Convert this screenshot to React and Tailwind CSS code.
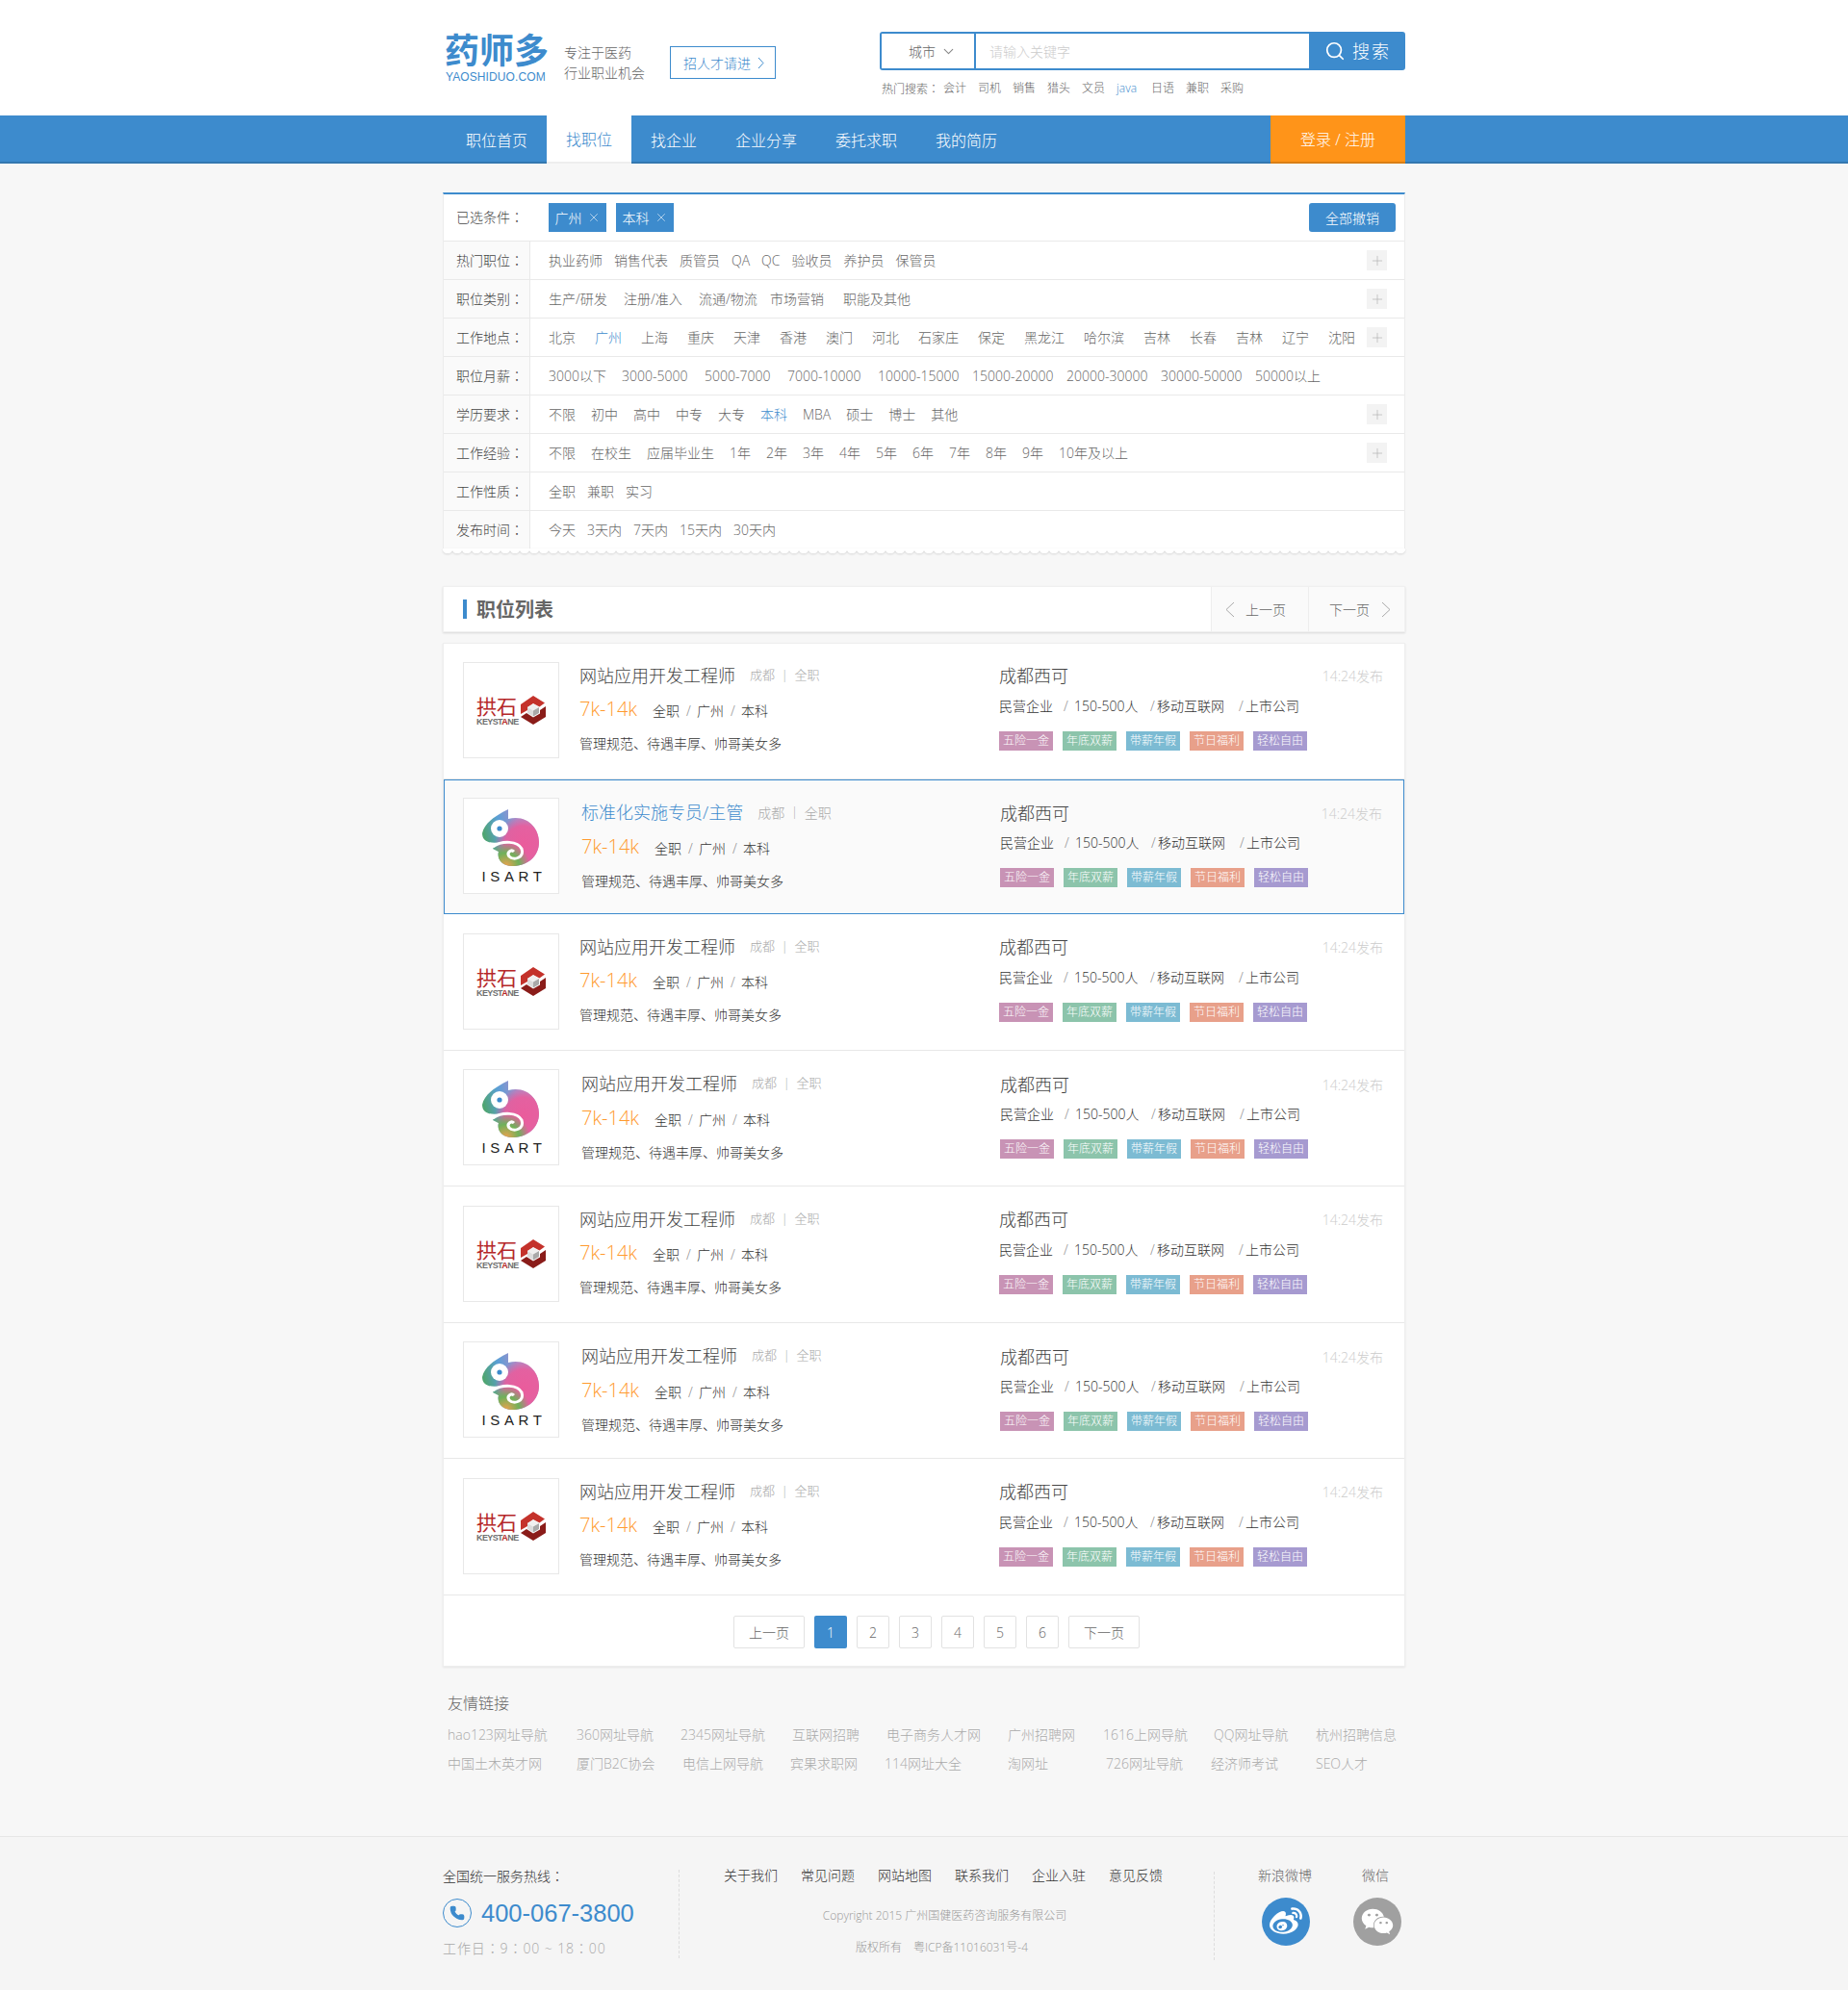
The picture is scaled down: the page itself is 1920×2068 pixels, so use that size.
import React from "react";
import { ChevronDown, Search, X, Plus, Phone } from "lucide-react";
import { FaWeibo, FaWeixin } from "react-icons/fa";

const FONT = "font-['Open_Sans','Noto_Sans_CJK_SC',sans-serif]";

const Co = () => <span className="font-['Noto_Sans_CJK_TC',sans-serif]">：</span>;

function Chev({ dir = "right", w = 7, h = 13, color = "#3d8bcd" }) {
  const pts = dir === "right" ? `1,1 ${w - 1},${h / 2} 1,${h - 1}` : `${w - 1},1 1,${h / 2} ${w - 1},${h - 1}`;
  return (
    <svg width={w} height={h} viewBox={`0 0 ${w} ${h}`} className="shrink-0">
      <polyline points={pts} fill="none" stroke={color} strokeWidth="1" />
    </svg>
  );
}

const filterRows = [
  { label: "热门职位", gap: "gap-3", plus: true, items: [["执业药师"], ["销售代表"], ["质管员"], ["QA"], ["QC"], ["验收员"], ["养护员"], ["保管员"]] },
  { label: "职位类别", gap: "", plus: true, items: [["生产/研发", "w-[78px]"], ["注册/准入", "w-[78px]"], ["流通/物流", "w-[74px]"], ["市场营销", "w-[76px]"], ["职能及其他"]] },
  { label: "工作地点", gap: "gap-5", plus: true, items: [["北京"], ["广州", "text-[#3d8bcd]"], ["上海"], ["重庆"], ["天津"], ["香港"], ["澳门"], ["河北"], ["石家庄"], ["保定"], ["黑龙江"], ["哈尔滨"], ["吉林"], ["长春"], ["吉林"], ["辽宁"], ["沈阳"]] },
  { label: "职位月薪", gap: "", plus: false, items: [["3000以下", "w-[76px]"], ["3000-5000", "w-[86px]"], ["5000-7000", "w-[86px]"], ["7000-10000", "w-[94px]"], ["10000-15000", "w-[98px]"], ["15000-20000", "w-[98px]"], ["20000-30000", "w-[98px]"], ["30000-50000", "w-[98px]"], ["50000以上"]] },
  { label: "学历要求", gap: "gap-4", plus: true, items: [["不限"], ["初中"], ["高中"], ["中专"], ["大专"], ["本科", "text-[#3d8bcd]"], ["MBA"], ["硕士"], ["博士"], ["其他"]] },
  { label: "工作经验", gap: "gap-4", plus: true, items: [["不限"], ["在校生"], ["应届毕业生"], ["1年"], ["2年"], ["3年"], ["4年"], ["5年"], ["6年"], ["7年"], ["8年"], ["9年"], ["10年及以上"]] },
  { label: "工作性质", gap: "gap-3", plus: false, items: [["全职"], ["兼职"], ["实习"]] },
  { label: "发布时间", gap: "gap-3", plus: false, items: [["今天"], ["3天内"], ["7天内"], ["15天内"], ["30天内"]] },
];

const tags = [
  ["五险一金", "bg-[#c893b5]"],
  ["年底双薪", "bg-[#8cc4ab]"],
  ["带薪年假", "bg-[#7cbbd3]"],
  ["节日福利", "bg-[#e8a08a]"],
  ["轻松自由", "bg-[#a69ad0]"],
];

const links1 = [
  ["hao123网址导航", "w-[134px]"], ["360网址导航", "w-[108px]"], ["2345网址导航", "w-[116px]"], ["互联网招聘", "w-[98px]"], ["电子商务人才网", "w-[126px]"], ["广州招聘网", "w-[99px]"], ["1616上网导航", "w-[115px]"], ["QQ网址导航", "w-[106px]"], ["杭州招聘信息", ""],
];
const links2 = [
  ["中国土木英才网", "w-[134px]"], ["厦门B2C协会", "w-[110px]"], ["电信上网导航", "w-[112px]"], ["宾果求职网", "w-[98px]"], ["114网址大全", "w-[128px]"], ["淘网址", "w-[102px]"], ["726网址导航", "w-[109px]"], ["经济师考试", "w-[109px]"], ["SEO人才", ""],
];

const rowHeights = ["h-[141px]", "h-[140px]", "h-[142px]", "h-[141px]", "h-[142px]", "h-[141px]", "h-[142px]"];

function KeystoneLogo() {
  return (
    <div className="flex items-start pt-[33px] pl-[13px]">
      <div className="w-[46px]">
        <div className="text-[21px] leading-[22px] font-normal text-[#b5282a] whitespace-nowrap font-['Noto_Sans_CJK_SC',sans-serif]">拱石</div>
        <div className="mt-[2px] text-[9px] leading-[9px] font-bold tracking-[-0.6px] text-[#6f6f6f] whitespace-nowrap font-['Liberation_Sans',sans-serif]">
          KEYST<span className="text-[#b5282a]">A</span>NE
        </div>
      </div>
      <svg width="26" height="30" viewBox="0 0 26 30" className="mt-[1px]">
        <path d="M0 9 L13 0 L25 7.5 L19.5 11.5 L13 8 L7 12 L7 15 L0 19 Z" fill="#c4322b" />
        <path d="M26 11 L26 22 L13 30 L0 22 L6 18 L13 22.5 L20 18.5 L20 15 Z" fill="#8a1c19" />
        <path d="M13 8.5 L19 12 L13 15.5 L7 12 Z" fill="#f0f0f0" />
        <path d="M7 12 L13 15.5 L13 21.5 L7 18 Z" fill="#dcdcdc" />
        <path d="M19 12 L13 15.5 L13 21.5 L19 18 Z" fill="#a9a9a9" />
      </svg>
    </div>
  );
}

function IsartLogo() {
  const body = "M19 36 C21 25 34 17 46 11 L46 21 C66 16 78 31 78 45 C78 60 66 70 50 70 C40 70 34 63 36 55 L30 52 C33 47 36 46 39 45 C30 47 19 46 19 36 Z";
  return (
    <div className="flex flex-col items-center">
      <svg width="98" height="74" viewBox="0 0 98 74" className="block">
        <defs>
          <linearGradient id="chamA" x1="0" y1="0.35" x2="1" y2="0.1">
            <stop offset="0" stopColor="#4fa56f" />
            <stop offset="0.3" stopColor="#5a9fd6" />
            <stop offset="0.62" stopColor="#a58fcb" />
            <stop offset="1" stopColor="#c08ac0" />
          </linearGradient>
          <radialGradient id="chamP" cx="0.72" cy="0.62" r="0.5">
            <stop offset="0" stopColor="#ea5c9c" />
            <stop offset="0.65" stopColor="#ea5c9c" stopOpacity="0.9" />
            <stop offset="1" stopColor="#ea5c9c" stopOpacity="0" />
          </radialGradient>
          <radialGradient id="chamB" cx="0.42" cy="1" r="0.42">
            <stop offset="0" stopColor="#eda14d" />
            <stop offset="0.55" stopColor="#6fb15a" />
            <stop offset="1" stopColor="#6fb15a" stopOpacity="0" />
          </radialGradient>
        </defs>
        <path d={body} fill="url(#chamA)" />
        <path d={body} fill="url(#chamP)" />
        <path d={body} fill="url(#chamB)" />
        <circle cx="37" cy="31" r="9" fill="#fff" />
        <circle cx="37" cy="31" r="2.6" fill="#3d8bcd" />
        <path d="M30 50 C40 43 56 44 60 52 C63 61 52 65 47 60 C44 56 49 52 52 55" fill="none" stroke="#fff" strokeWidth="3" />
      </svg>
      <div className="mt-0 text-[15px] leading-[14px] tracking-[4.6px] text-[#222] font-['Liberation_Sans',sans-serif] pl-[6px]">ISART</div>
    </div>
  );
}

function JobRow({ i }) {
  const even = i % 2 === 1;
  const active = i === 1;
  const late = !even && i > 0;
  return (
    <div className={`flex ${rowHeights[i]} ${active ? "border border-[#3d8bcd] bg-[#fafafa]" : "border-b border-[#e8e8e8]"} ${even && !active ? "border-t border-t-transparent" : ""}`}>
      <div className={`${active ? "ml-[19px] mt-[18px]" : even ? "ml-5 mt-[18px]" : late ? "ml-5 mt-5" : "ml-5 mt-[19px]"} w-[100px] h-[100px] border border-[#e8e8e8] bg-white shrink-0`}>
        {even ? <IsartLogo /> : <KeystoneLogo />}
      </div>
      <div className={`${even ? "ml-[23px] w-[435px]" : "ml-[21px] w-[436px]"} ${late ? "pt-[21px]" : "pt-5"}`}>
        <div className="flex items-center h-[26px]">
          <span className={`text-[18px] leading-[26px] whitespace-nowrap ${active ? "text-[#3d8bcd]" : "text-[#444]"}`}>
            {active ? "标准化实施专员/主管" : "网站应用开发工程师"}
          </span>
          <span className={`${active ? "ml-[15px] text-[14px]" : "ml-[15px] text-[13px]"} text-[#aaa] flex items-center`}>
            成都<span className="mx-[7px] text-[12px]">|</span>全职
          </span>
        </div>
        <div className={`flex items-center h-[30px] ${even ? "mt-2" : "mt-[7px]"}`}>
          <span className="w-[76px] text-[20px] leading-[30px] text-[#ff9a2e]">7k-14k</span>
          <span className="text-[14px] leading-[24px] text-[#333] mt-[3px] flex">
            <span className="w-[35px]">全职</span>
            <span className="w-[11px] text-[#888]">/</span>
            <span className="w-[35px]">广州</span>
            <span className="w-[11px] text-[#888]">/</span>
            <span>本科</span>
          </span>
        </div>
        <div className="text-[14px] leading-[24px] text-[#333] mt-[9px] whitespace-nowrap">管理规范、待遇丰厚、帅哥美女多</div>
      </div>
      <div className={`flex-1 pr-[22px] ${even || late ? "pt-[21px]" : "pt-5"}`}>
        <div className="flex justify-between items-center h-[26px]">
          <span className="text-[18px] leading-[26px] text-[#444]">成都西可</span>
          <span className="text-[14px] text-[#ccc]">14:24发布</span>
        </div>
        <div className={`flex text-[14px] leading-[24px] text-[#333] whitespace-nowrap ${even ? "mt-[6px]" : "mt-[7px]"}`}>
          <span className="w-[67px]">民营企业</span>
          <span className="w-[11px] text-[#888]">/</span>
          <span className="w-[79px]">150-500人</span>
          <span className="w-[7px] text-[#888]">/</span>
          <span className="w-[85px]">移动互联网</span>
          <span className="w-[7px] text-[#888]">/</span>
          <span>上市公司</span>
        </div>
        <div className="flex gap-[10px] mt-[14px]">
          {tags.map(([t, c]) => (
            <span key={t} className={`${c} w-[56px] h-5 text-[12px] leading-5 text-white text-center whitespace-nowrap`}>{t}</span>
          ))}
        </div>
      </div>
    </div>
  );
}

export default function App() {
  return (
    <div className={`w-full min-h-[2068px] bg-[#f7f7f7] font-light ${FONT}`}>
      <header className="h-[120px] bg-white">
        <div className="w-[1000px] mx-auto flex">
          <div className="ml-[2px] pt-7 w-[124px]">
            <div className="text-[36px] leading-[44px] font-bold text-[#3d8bcd] whitespace-nowrap font-['Noto_Sans_CJK_SC',sans-serif]">药师多</div>
            <div className="mt-[1px] ml-[1px] text-[12px] leading-[14px] tracking-[0.1px] text-[#3d8bcd] font-['Liberation_Sans',sans-serif] whitespace-nowrap">YAOSHIDUO.COM</div>
          </div>
          <div className="pt-[44px] text-[14px] leading-[21px] text-[#666] w-[110px] whitespace-nowrap">
            <div>专注于医药</div>
            <div>行业职业机会</div>
          </div>
          <div className="pt-[48px] w-[218px]">
            <div className="w-[110px] h-[34px] border border-[#3d8bcd] flex items-center pl-[13px] text-[14px] text-[#3d8bcd]">
              招人才请进
              <span className="ml-[7px]"><Chev /></span>
            </div>
          </div>
          <div className="pt-[33px] w-[546px]">
            <div className="flex h-10 border-2 border-[#3d8bcd] rounded-[3px]">
              <div className="w-[98px] bg-white border-r-2 border-[#3d8bcd] flex items-center pl-7 text-[14px] text-[#666]">
                城市
                <ChevronDown size={17} strokeWidth={1.5} className="ml-[5px] text-[#888]" />
              </div>
              <div className="w-[346px] bg-white flex items-center pl-[14px] text-[14px] text-[#ccc]">请输入关键字</div>
              <div className="flex-1 bg-[#3d8bcd] flex items-center pl-4 text-white">
                <Search size={22} strokeWidth={1.9} />
                <span className="ml-[7px] text-[18px] tracking-[2px] whitespace-nowrap">搜索</span>
              </div>
            </div>
            <div className="mt-[10px] ml-[2px] flex gap-3 text-[12px] leading-[18px] text-[#666] whitespace-nowrap">
              <span className="w-[52px]">热门搜索<Co /></span>
              {["会计", "司机", "销售", "猎头", "文员"].map((t) => <span key={t}>{t}</span>)}
              <span className="text-[#3d8bcd] w-6">java</span>
              {["日语", "兼职", "采购"].map((t) => <span key={t}>{t}</span>)}
            </div>
          </div>
        </div>
      </header>

      <nav className="h-[50px] bg-[#3d8bcd] border-b-2 border-[#3478b0]">
        <div className="w-[1000px] mx-auto flex h-[50px] pl-1 text-[16px] text-white">
          <div className="px-5 pt-px h-full flex items-center">职位首页</div>
          <div className="px-5 pt-px h-full flex items-center bg-white text-[#3d8bcd] border-b-2 border-[#eeeeee]">找职位</div>
          <div className="px-5 pt-px h-full flex items-center">找企业</div>
          <div className="px-5 pt-px h-full flex items-center">企业分享</div>
          <div className="px-5 pt-px h-full flex items-center">委托求职</div>
          <div className="px-5 pt-px h-full flex items-center">我的简历</div>
          <div className="ml-auto w-[140px] pt-px h-full flex items-center justify-center bg-[#ff9419] border-b-2 border-[#d97f16]">登录 / 注册</div>
        </div>
      </nav>

      <main className="w-[1000px] mx-auto pt-[30px]">
        <section className="bg-white border-t-2 border-x border-t-[#3d8bcd] border-x-[#ececec]">
          <div className="h-12 flex items-center pl-[13px] pr-[9px]">
            <span className="w-[96px] text-[14px] text-[#444] whitespace-nowrap -mt-[2px]">已选条件<Co /></span>
            <div className="flex gap-[10px]">
              {["广州", "本科"].map((t) => (
                <span key={t} className="w-[60px] h-[30px] bg-[#3d8bcd] text-white text-[14px] flex items-center justify-center gap-[5px]">
                  {t}
                  <X size={14} strokeWidth={1} />
                </span>
              ))}
            </div>
            <span className="ml-auto w-[90px] h-[30px] rounded-[3px] bg-[#3d8bcd] text-white text-[14px] flex items-center justify-center">全部撤销</span>
          </div>
          {filterRows.map((r) => (
            <div key={r.label} className="flex h-10 border-t border-[#e9e9e9]">
              <div className="w-[90px] shrink-0 bg-[#fafafa] border-r border-[#e9e9e9] pl-[13px] flex items-center text-[14px] text-[#444] whitespace-nowrap">{r.label}<Co /></div>
              <div className="flex-1 flex items-center justify-between pl-[19px] pr-[18px] text-[14px] text-[#666] whitespace-nowrap">
                <div className={`flex items-center ${r.gap}`}>
                  {r.items.map(([t, c], idx) => <span key={idx} className={c || ""}>{t}</span>)}
                </div>
                {r.plus && (
                  <span className="w-[21px] h-[21px] bg-[#f3f3f3] flex items-center justify-center text-[#b0b0b0]">
                    <Plus size={16} strokeWidth={1} />
                  </span>
                )}
              </div>
            </div>
          ))}
        </section>
        <div className="h-[6px] bg-[radial-gradient(circle_at_5px_0,#ffffff_5px,transparent_5.5px)] bg-[length:10px_6px] bg-repeat-x drop-shadow-[0_1px_1px_rgba(0,0,0,0.12)]" />

        <section className="mt-[33px] h-12 flex bg-white shadow-[0_1px_2px_rgba(0,0,0,0.12)] border border-[#f0f0f0]">
          <div className="flex-1 flex items-center pl-5">
            <span className="w-1 h-5 bg-[#3d8bcd]" />
            <span className="ml-[10px] text-[20px] font-bold text-[#666] leading-6 font-['Noto_Sans_CJK_SC',sans-serif]">职位列表</span>
          </div>
          <div className="w-[101px] bg-[#fafafa] border-l border-[#eeeeee] flex items-center pl-[14px] text-[14px] text-[#666]">
            <Chev dir="left" w={10} h={17} color="#aaaaaa" />
            <span className="ml-[11px]">上一页</span>
          </div>
          <div className="w-[100px] bg-[#fafafa] border-l border-[#eeeeee] flex items-center pl-[21px] text-[14px] text-[#666]">
            <span>下一页</span>
            <span className="ml-[12px]"><Chev dir="right" w={10} h={17} color="#aaaaaa" /></span>
          </div>
        </section>

        <section className="mt-[11px] bg-white border border-[#eeeeee] shadow-[0_1px_2px_rgba(0,0,0,0.08)]">
          {[0, 1, 2, 3, 4, 5, 6].map((i) => <JobRow key={i} i={i} />)}
          <div className="h-[73px] flex items-start pt-[21px] pl-[301px] gap-[10px] text-[14px] text-[#666]">
            <span className="w-[74px] h-[34px] border border-[#e2e2e2] rounded-[2px] bg-white flex items-center justify-center">上一页</span>
            <span className="w-[34px] h-[34px] rounded-[2px] bg-[#3d8bcd] text-white flex items-center justify-center">1</span>
            {["2", "3", "4", "5", "6"].map((n) => (
              <span key={n} className="w-[34px] h-[34px] border border-[#e2e2e2] rounded-[2px] bg-white flex items-center justify-center">{n}</span>
            ))}
            <span className="w-[74px] h-[34px] border border-[#e2e2e2] rounded-[2px] bg-white flex items-center justify-center">下一页</span>
          </div>
        </section>

        <section className="pl-[5px] pt-[26px] h-[176px]">
          <div className="text-[16px] leading-6 text-[#666]">友情链接</div>
          <div className="mt-[11px] flex text-[14px] leading-[20px] text-[#aaa] whitespace-nowrap">
            {links1.map(([t, c]) => <span key={t} className={c}>{t}</span>)}
          </div>
          <div className="mt-[10px] flex text-[14px] leading-[20px] text-[#aaa] whitespace-nowrap">
            {links2.map(([t, c]) => <span key={t} className={c}>{t}</span>)}
          </div>
        </section>
      </main>

      <footer className="h-[160px] bg-[#f5f5f5] border-t border-[#e6e6e6]">
        <div className="w-[1000px] mx-auto flex">
          <div className="w-[245px] pt-[30px]">
            <div className="text-[14px] leading-5 text-[#333]">全国统一服务热线<Co /></div>
            <div className="mt-[13px] flex items-center">
              <span className="w-[30px] h-[30px] rounded-full border border-[#3d8bcd] flex items-center justify-center text-[#3d8bcd]">
                <Phone size={16} strokeWidth={2} fill="#3d8bcd" />
              </span>
              <span className="ml-[10px] text-[25.5px] leading-[30px] text-[#3d8bcd] font-['Liberation_Sans',sans-serif] whitespace-nowrap">400-067-3800</span>
            </div>
            <div className="mt-[11px] text-[14px] leading-5 text-[#aaa] whitespace-nowrap tracking-[0.9px]">工作日<Co />9<Co />00 ~ 18<Co />00</div>
          </div>
          <div className="mt-[34px] h-[92px] border-l border-dashed border-[#dddddd]" />
          <div className="w-[555px] pt-[30px]">
            <div className="pl-[46px] flex gap-6 text-[14px] leading-5 text-[#333] whitespace-nowrap">
              {["关于我们", "常见问题", "网站地图", "联系我们", "企业入驻", "意见反馈"].map((t) => <span key={t}>{t}</span>)}
            </div>
            <div className="mt-[22px] text-center text-[12px] leading-5 text-[#999] pr-[4px]">Copyright 2015 广州国健医药咨询服务有限公司</div>
            <div className="pr-[10px] mt-[13px] text-center text-[12px] leading-5 text-[#999]">版权所有　粤ICP备11016031号-4</div>
          </div>
          <div className="mt-[36px] h-[92px] border-l border-dashed border-[#dddddd]" />
          <div className="flex-1 pt-[30px] pl-[45px]">
            <div className="flex text-[14px] leading-5 text-[#666] whitespace-nowrap">
              <span className="w-[108px]">新浪微博</span>
              <span>微信</span>
            </div>
            <div className="mt-[13px] flex items-center">
              <span className="ml-[4px] w-[50px] h-[50px] rounded-full bg-[#3d8bcd] flex items-center justify-center text-white">
                <FaWeibo size={34} />
              </span>
              <span className="ml-[45px] w-[50px] h-[50px] rounded-full bg-[#a0a0a0] flex items-center justify-center text-white">
                <FaWeixin size={34} />
              </span>
            </div>
          </div>
        </div>
      </footer>
    </div>
  );
}
